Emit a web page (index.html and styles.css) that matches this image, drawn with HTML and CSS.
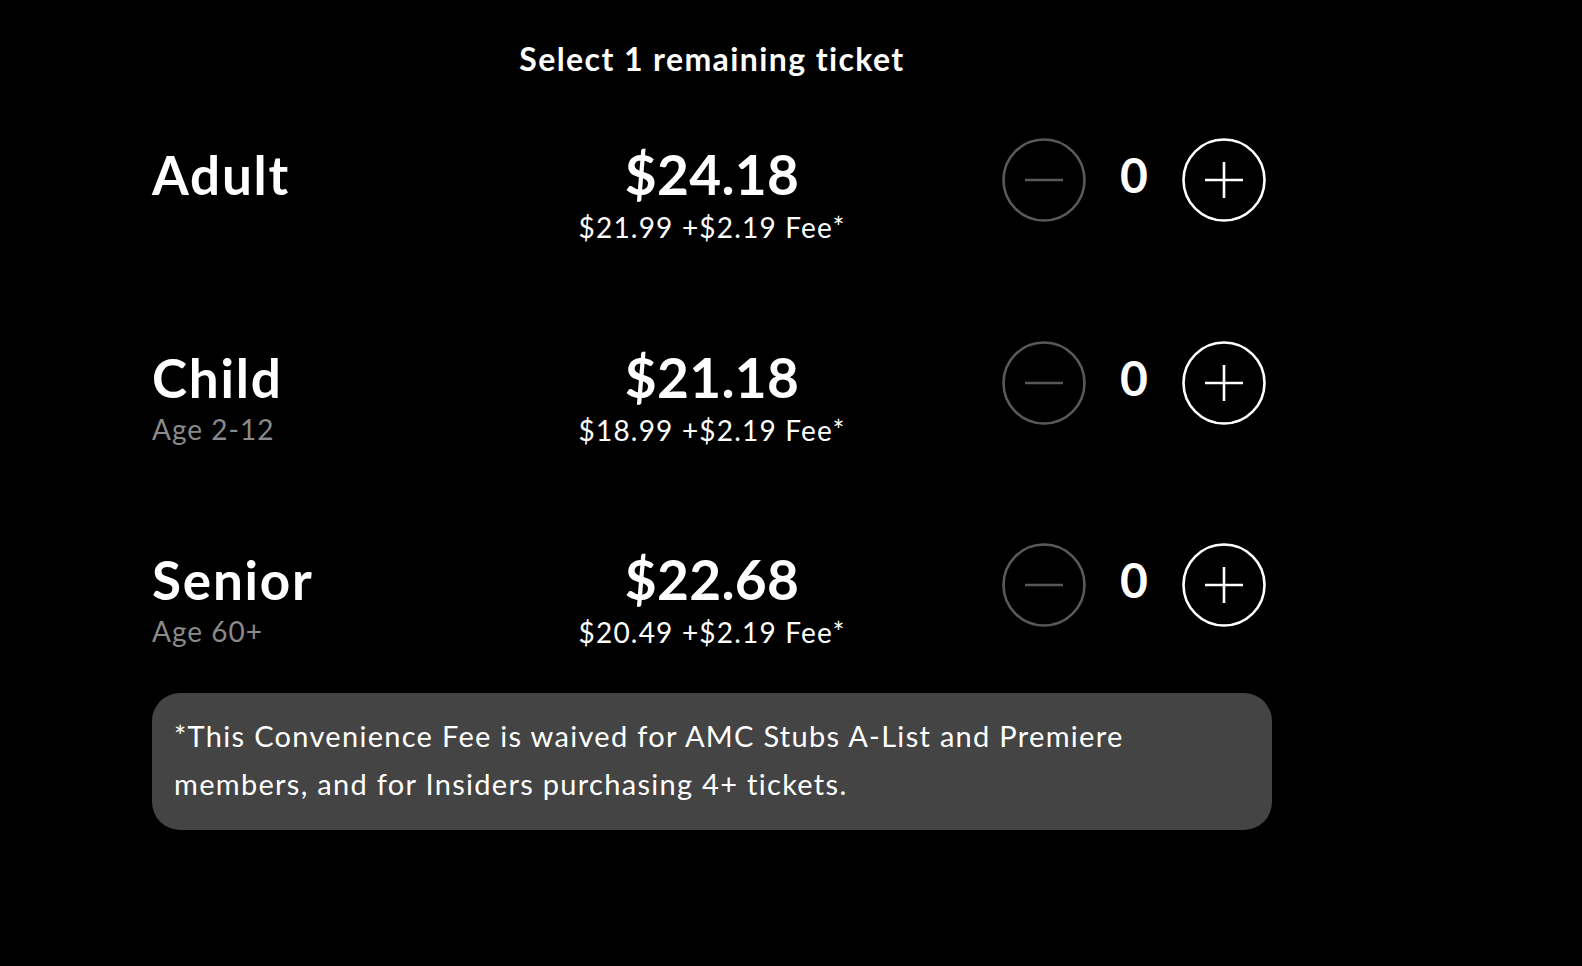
FILE: index.html
```html
<!DOCTYPE html>
<html lang="en">
<head>
<meta charset="utf-8">
<title>Select tickets</title>
<link rel="stylesheet" href="styles.css">
</head>
<body>
<main class="tickets">
  <h1 class="title">Select 1 remaining ticket</h1>

  <section class="row">
    <div class="label">
      <div class="name">Adult</div>
    </div>
    <div class="price">
      <div class="total">$24.18</div>
      <div class="breakdown">$21.99 +$2.19 Fee*</div>
    </div>
    <div class="stepper">
      <button class="btn btn-minus" aria-label="Remove Adult ticket">
        <svg viewBox="0 0 84 84" width="84" height="84"><circle cx="42" cy="42" r="40.5"/><line x1="23" y1="42" x2="61" y2="42"/></svg>
      </button>
      <span class="count">0</span>
      <button class="btn btn-plus" aria-label="Add Adult ticket">
        <svg viewBox="0 0 84 84" width="84" height="84"><circle cx="42" cy="42" r="40.5"/><line x1="23" y1="42" x2="61" y2="42"/><line x1="42" y1="24" x2="42" y2="60"/></svg>
      </button>
    </div>
  </section>

  <section class="row">
    <div class="label">
      <div class="name">Child</div>
      <div class="age">Age 2-12</div>
    </div>
    <div class="price">
      <div class="total">$21.18</div>
      <div class="breakdown">$18.99 +$2.19 Fee*</div>
    </div>
    <div class="stepper">
      <button class="btn btn-minus" aria-label="Remove Child ticket">
        <svg viewBox="0 0 84 84" width="84" height="84"><circle cx="42" cy="42" r="40.5"/><line x1="23" y1="42" x2="61" y2="42"/></svg>
      </button>
      <span class="count">0</span>
      <button class="btn btn-plus" aria-label="Add Child ticket">
        <svg viewBox="0 0 84 84" width="84" height="84"><circle cx="42" cy="42" r="40.5"/><line x1="23" y1="42" x2="61" y2="42"/><line x1="42" y1="24" x2="42" y2="60"/></svg>
      </button>
    </div>
  </section>

  <section class="row">
    <div class="label">
      <div class="name">Senior</div>
      <div class="age">Age 60+</div>
    </div>
    <div class="price">
      <div class="total">$22.68</div>
      <div class="breakdown">$20.49 +$2.19 Fee*</div>
    </div>
    <div class="stepper">
      <button class="btn btn-minus" aria-label="Remove Senior ticket">
        <svg viewBox="0 0 84 84" width="84" height="84"><circle cx="42" cy="42" r="40.5"/><line x1="23" y1="42" x2="61" y2="42"/></svg>
      </button>
      <span class="count">0</span>
      <button class="btn btn-plus" aria-label="Add Senior ticket">
        <svg viewBox="0 0 84 84" width="84" height="84"><circle cx="42" cy="42" r="40.5"/><line x1="23" y1="42" x2="61" y2="42"/><line x1="42" y1="24" x2="42" y2="60"/></svg>
      </button>
    </div>
  </section>

  <p class="note">*This Convenience Fee is waived for AMC Stubs A-List and Premiere members, and for Insiders purchasing 4+ tickets.</p>
</main>
</body>
</html>
```

FILE: styles.css
```css
html, body {
  margin: 0;
  padding: 0;
  background: #000;
}

body {
  color: #fff;
  font-family: Lato, "Noto Sans", "DejaVu Sans", sans-serif;
}

.tickets {
  width: 1120px;
  margin-left: 152px;
  display: flex;
  flex-direction: column;
}

.title {
  margin: 39px 0 0;
  font-size: 32px;
  line-height: 40px;
  font-weight: 700;
  letter-spacing: 1.4px;
  text-align: center;
}

.row {
  display: grid;
  grid-template-columns: 1fr auto 1fr;
  align-items: start;
  height: 120px;
}

.row:first-of-type {
  margin-top: 59px;
}

.row + .row {
  margin-top: 82.5px;
}

.label {
  padding-top: 10px;
}

.name {
  font-size: 53px;
  line-height: 53px;
  font-weight: 700;
  letter-spacing: 1.8px;
}

.age {
  margin-top: 8px;
  font-size: 28px;
  line-height: 34px;
  color: #8a8a8a;
  letter-spacing: 1px;
}

.price {
  padding-top: 9px;
  text-align: center;
}

.total {
  font-size: 55px;
  line-height: 55px;
  font-weight: 700;
  letter-spacing: 0.3px;
}

.breakdown {
  margin-top: 8px;
  font-size: 28px;
  line-height: 34px;
  letter-spacing: 1.2px;
}

.stepper {
  justify-self: end;
  margin-right: 6px;
  display: flex;
  align-items: center;
}

.btn {
  width: 84px;
  height: 84px;
  padding: 0;
  margin: 0;
  border: 0;
  background: none;
  display: block;
  cursor: pointer;
}

.btn svg {
  display: block;
  fill: none;
  stroke-width: 2.6;
  stroke-linecap: butt;
}

.btn-minus svg {
  stroke: #595959;
}

.btn-plus svg {
  stroke: #fff;
}

.count {
  width: 96px;
  margin-bottom: 10px;
  text-align: center;
  font-size: 48px;
  line-height: 48px;
  font-weight: 700;
}

.note {
  margin: 30px 0 0;
  background: #444;
  border-radius: 28px;
  padding: 19px 100px 22px 22px;
  font-size: 29px;
  line-height: 48px;
  letter-spacing: 1.3px;
}
```
